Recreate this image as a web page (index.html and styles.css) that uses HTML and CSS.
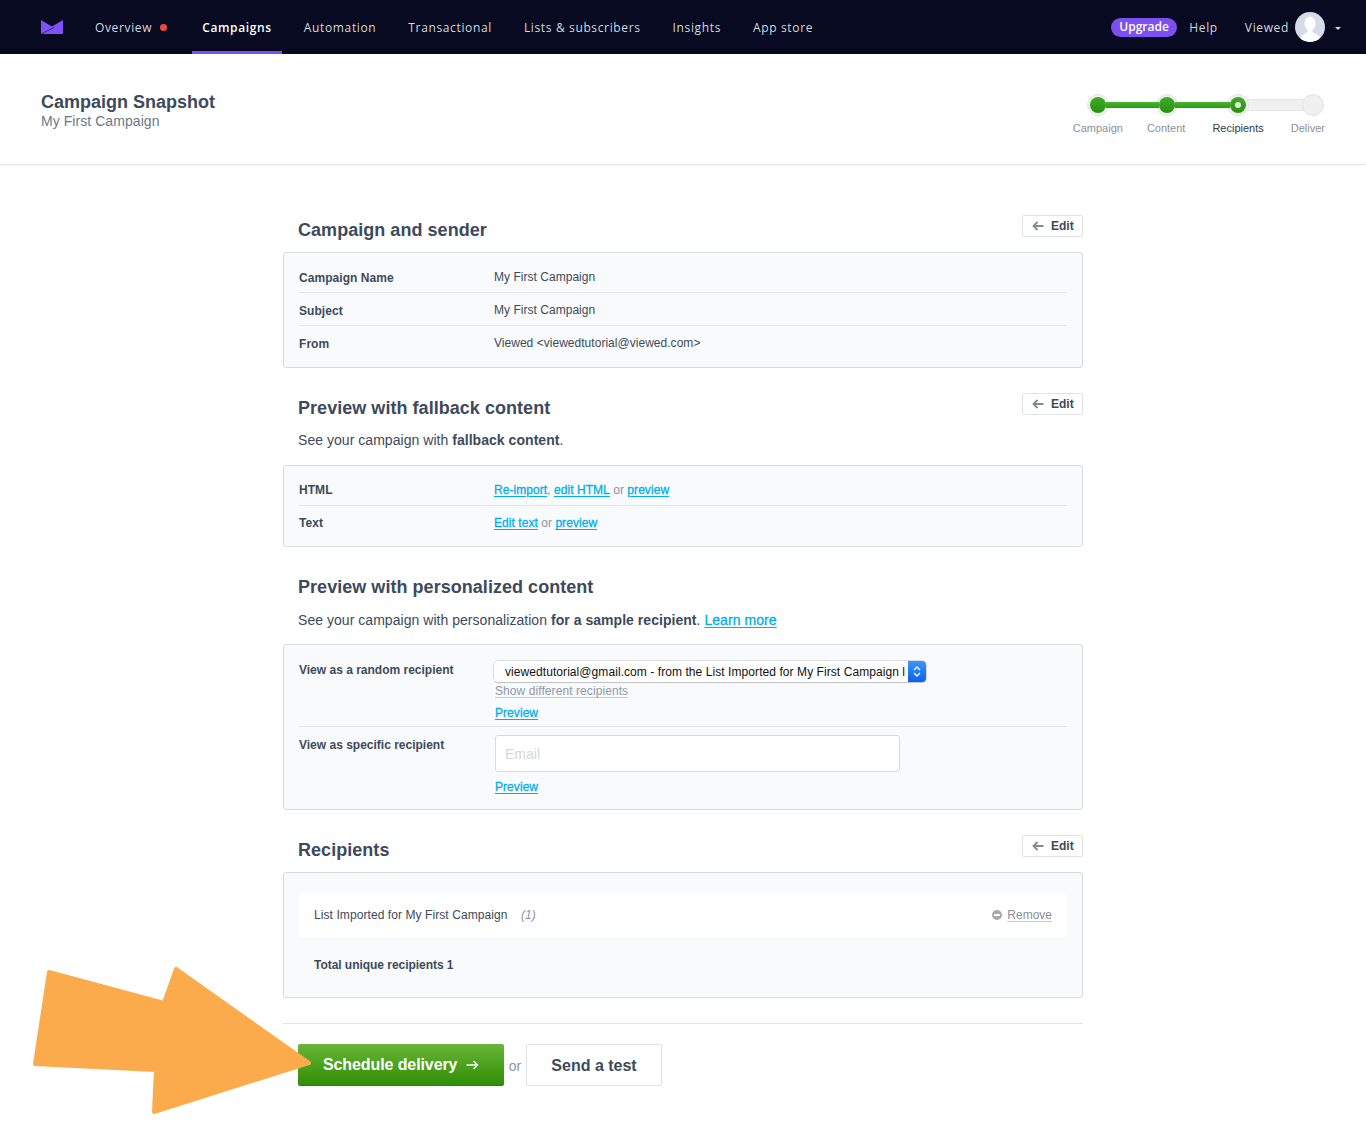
FILE: index.html
```html
<!DOCTYPE html>
<html lang="en">
<head>
<meta charset="utf-8">
<title>Campaign Snapshot</title>
<link rel="stylesheet" href="styles.css">
</head>
<body>
<nav class="nav">
  <svg class="logo" width="22" height="14" viewBox="0 0 22 14"><path d="M0 0 L11 6.5 L22 0 V14 H0 Z" fill="#7f52f5"/><path d="M0 14 L13 7.5" fill="none" stroke="#2a1f6e" stroke-width="0.8"/></svg>
  <ul class="nav-links">
    <li class="nav-link nav-overview">Overview<span class="nav-dot"></span></li>
    <li class="nav-link nav-active">Campaigns</li>
    <li class="nav-link">Automation</li>
    <li class="nav-link">Transactional</li>
    <li class="nav-link">Lists &amp; subscribers</li>
    <li class="nav-link">Insights</li>
    <li class="nav-link">App store</li>
  </ul>
  <div class="nav-right">
    <span class="upgrade">Upgrade</span>
    <span class="nav-help">Help</span>
    <span class="nav-user">Viewed</span>
    <svg class="avatar" width="30" height="30" viewBox="0 0 30 30"><defs><clipPath id="avatar-clip"><circle cx="15" cy="15" r="15"/></clipPath></defs><circle cx="15" cy="15" r="15" fill="#d5dce6"/><g clip-path="url(#avatar-clip)" fill="#fff"><ellipse cx="15" cy="11.5" rx="5.5" ry="7"/><path d="M12.5 17 h5 v3 l6 3.5 q2 1.5 2 6.5 H5 q0-5 2-6.5 l5.5-3.5 Z"/></g></svg>
    <span class="caret"></span>
  </div>
</nav>

<header class="page-head">
  <div>
    <h1 class="page-title">Campaign Snapshot</h1>
    <p class="page-sub">My First Campaign</p>
  </div>
  <div class="stepper">
    <div class="track">
      <span class="dot dot-done"></span><span class="bar bar-1 bar-done"></span>
      <span class="dot dot-done"></span><span class="bar bar-2 bar-done"></span>
      <span class="dot dot-done dot-current"></span><span class="bar bar-3"></span>
      <span class="dot"></span>
    </div>
    <div class="step-labels">
      <span>Campaign</span><span>Content</span><span class="step-current">Recipients</span><span>Deliver</span>
    </div>
  </div>
</header>

<main class="main">
  <section class="section">
    <div class="sec-head">
      <h2 class="sec-title">Campaign and sender</h2>
      <a class="edit"><svg width="12" height="10" viewBox="0 0 12 10"><path d="M11.5 5 H1.5 M5.5 1 L1.5 5 L5.5 9" fill="none" stroke="#85888c" stroke-width="1.8"/></svg>Edit</a>
    </div>
    <div class="box box-gap">
      <div class="row"><span class="label">Campaign Name</span><span class="value">My First Campaign</span></div>
      <div class="row"><span class="label">Subject</span><span class="value">My First Campaign</span></div>
      <div class="row"><span class="label">From</span><span class="value">Viewed &lt;viewedtutorial@viewed.com&gt;</span></div>
    </div>
  </section>

  <section class="section">
    <div class="sec-head">
      <h2 class="sec-title">Preview with fallback content</h2>
      <a class="edit"><svg width="12" height="10" viewBox="0 0 12 10"><path d="M11.5 5 H1.5 M5.5 1 L1.5 5 L5.5 9" fill="none" stroke="#85888c" stroke-width="1.8"/></svg>Edit</a>
    </div>
    <p class="sec-text">See your campaign with <b>fallback content</b>.</p>
    <div class="box box-links">
      <div class="row"><span class="label">HTML</span><span class="value"><a class="link">Re-import</a><span class="muted">,</span> <a class="link">edit HTML</a> <span class="muted">or</span> <a class="link">preview</a></span></div>
      <div class="row"><span class="label">Text</span><span class="value"><a class="link">Edit text</a> <span class="muted">or</span> <a class="link">preview</a></span></div>
    </div>
  </section>

  <section class="section">
    <div class="sec-head">
      <h2 class="sec-title">Preview with personalized content</h2>
    </div>
    <p class="sec-text sec-text-low">See your campaign with personalization <b>for a sample recipient</b>. <a class="link">Learn more</a></p>
    <div class="box box-form">
      <div class="form-row">
        <span class="form-label">View as a random recipient</span>
        <div class="form-col">
          <div class="select-wrap">
            <select class="select"><option>viewedtutorial@gmail.com - from the List Imported for My First Campaign list</option></select>
            <span class="select-cap"><svg width="8" height="13" viewBox="0 0 8 13"><path d="M1 5 L4 2 L7 5 M1 8 L4 11 L7 8" fill="none" stroke="#fff" stroke-width="1.4"/></svg></span>
          </div>
          <a class="show-diff">Show different recipients</a>
          <a class="link preview-link">Preview</a>
        </div>
      </div>
      <div class="form-row form-row-2">
        <span class="form-label">View as specific recipient</span>
        <div class="form-col">
          <input class="email" type="text" placeholder="Email">
          <a class="link preview-link preview-2">Preview</a>
        </div>
      </div>
    </div>
  </section>

  <section class="section">
    <div class="sec-head">
      <h2 class="sec-title">Recipients</h2>
      <a class="edit"><svg width="12" height="10" viewBox="0 0 12 10"><path d="M11.5 5 H1.5 M5.5 1 L1.5 5 L5.5 9" fill="none" stroke="#85888c" stroke-width="1.8"/></svg>Edit</a>
    </div>
    <div class="box box-gap box-recipients">
      <div class="list-row">
        <span class="list-name">List Imported for My First Campaign <i class="list-count">(1)</i></span>
        <a class="remove"><span class="remove-icon"></span><span class="remove-text">Remove</span></a>
      </div>
      <div class="total">Total unique recipients 1</div>
    </div>
  </section>

  <footer class="actions">
    <a class="btn-primary">Schedule delivery<svg width="13" height="10" viewBox="0 0 13 10"><path d="M0.5 5 H11.5 M7.5 1 L11.5 5 L7.5 9" fill="none" stroke="#fff" stroke-width="1.3"/></svg></a>
    <span class="or">or</span>
    <a class="btn-secondary">Send a test</a>
  </footer>
</main>

<svg class="big-arrow" width="300" height="160" viewBox="0 0 300 160"><path d="M19 9 L134 40 L146 6 L279 100 L124 149 L126 107 L5 101 Z" fill="#fbab4c" stroke="#fbab4c" stroke-width="4" stroke-linejoin="round"/></svg>
</body>
</html>
```
FILE: styles.css
```css
* { box-sizing: border-box; }
html, body { margin: 0; padding: 0; }
body {
  position: relative;
  min-height: 1146px;
  background: #fff;
  color: #3c4a5c;
  font-family: "Liberation Sans", Arial, sans-serif;
  font-size: 12px;
}
a { cursor: pointer; }
h1, h2, p, ul { margin: 0; padding: 0; }

/* nav */
.nav {
  display: flex;
  align-items: center;
  height: 54px;
  padding: 0 25px 0 41px;
  background: #070a20;
  font-family: "Open Sans", sans-serif;
  font-size: 12px;
  letter-spacing: 0.64px;
  color: #d6d8de;
}
.logo { flex: none; margin-right: 22px; }
.nav-links { display: flex; gap: 12px; height: 54px; list-style: none; }
.nav-link {
  display: flex;
  align-items: center;
  height: 54px;
  padding: 0 10px;
  border-bottom: 3px solid transparent;
  border-top: 3px solid transparent;
  white-space: nowrap;
}
.nav-overview { padding-right: 13px; }
.nav-dot {
  width: 7px;
  height: 7px;
  margin-left: 8px;
  border-radius: 50%;
  background: #f4483a;
}
.nav-active { border-bottom-color: #7c4ff0; color: #fff; font-weight: 600; }
.nav-right { display: flex; align-items: center; margin-left: auto; }
.upgrade {
  padding: 0 8.5px;
  height: 19px;
  line-height: 18px;
  margin-right: 12px;
  border-radius: 10px;
  background: #7c4ff0;
  color: #fff;
  font-weight: 600;
  letter-spacing: 0;
}
.nav-help { margin-right: 27px; }
.nav-user { margin-right: 6px; }
.avatar { flex: none; margin-top: -1px; }
.caret {
  width: 0;
  height: 0;
  margin: 2px 0 0 10px;
  border: 3px solid transparent;
  border-top: 3px solid #d6d8de;
  border-bottom: 0;
}

/* page header */
.page-head {
  display: flex;
  justify-content: space-between;
  height: 111px;
  padding: 0 41px;
  border-bottom: 1px solid #e6e7e9;
  box-shadow: 0 1px 2px rgba(0, 0, 0, 0.04);
}
.page-title {
  margin-top: 37px;
  font-size: 18px;
  line-height: 22px;
  font-weight: 700;
  color: #3c4a5c;
}
.page-sub {
  margin-top: -1px;
  font-size: 14px;
  line-height: 18px;
  letter-spacing: 0.06px;
  color: #6b7889;
}
.stepper { display: flex; flex-direction: column; align-items: flex-end; padding-top: 40px; }
.track { display: flex; align-items: center; height: 22px; margin-right: 1px; }
.dot {
  position: relative;
  z-index: 1;
  flex: none;
  width: 22px;
  height: 22px;
  border-radius: 50%;
  background: #f0f0f0;
  border: 1px solid #e4e4e4;
  display: flex;
  align-items: center;
  justify-content: center;
}
.dot-done::before {
  content: "";
  width: 16px;
  height: 16px;
  border-radius: 50%;
  background: linear-gradient(#3cae24, #2a9010);
}
.dot-current::after {
  content: "";
  position: absolute;
  width: 6px;
  height: 6px;
  border-radius: 50%;
  background: #e9efe6;
}
.bar { flex: none; margin: 0 -3px; background: #f0f0f0; height: 12px; border-top: 1px solid #e4e4e4; border-bottom: 1px solid #e8e8e8; }
.bar-1 { width: 53px; }
.bar-2 { width: 55px; }
.bar-3 { width: 59px; }
.bar-done {
  position: relative;
  z-index: 2;
  height: 6px;
  border: 0;
  background: linear-gradient(#48b62e, #2f9a15);
}
.step-labels {
  display: flex;
  margin-top: 5px;
  font-size: 11px;
  line-height: 14px;
  color: #8a919b;
}
.step-labels span + span { margin-left: 24px; }
.step-labels span:nth-child(3) { margin-left: 27px; }
.step-labels span:nth-child(4) { margin-left: 27px; }
.step-current { color: #2d3a4a; }

/* main */
.main { width: 800px; margin: 0 auto; padding-top: 50px; }
.section { margin-bottom: 25px; }
.sec-head { display: flex; justify-content: space-between; align-items: flex-start; padding-left: 15px; }
.sec-title {
  margin-top: 4px;
  font-size: 18px;
  line-height: 22px;
  font-weight: 700;
  letter-spacing: 0.04px;
  color: #3c4a5c;
}
.edit {
  display: flex;
  align-items: center;
  gap: 7px;
  width: 61px;
  height: 22px;
  padding-left: 9px;
  border: 1px solid #dfe2e6;
  border-radius: 2px;
  background: #fff;
  font-size: 12px;
  font-weight: 700;
  color: #3c4a5c;
}
.sec-text {
  margin: 11px 0 15px;
  padding-left: 15px;
  font-size: 14px;
  line-height: 20px;
  letter-spacing: 0.04px;
  color: #3c4a5c;
}
.sec-text-low { margin: 12px 0 14px; }
.box {
  padding: 7px 15px 8px;
  border: 1px solid #d6dbe2;
  border-radius: 3px;
  background: #f9fafb;
}
.box-gap { margin-top: 11px; }
.box-links { padding-bottom: 7px; }
.row { display: flex; align-items: center; height: 33px; border-bottom: 1px solid #e3e6ea; }
.row:last-child { border-bottom: 0; }
.label { width: 195px; padding-top: 3px; font-size: 12px; font-weight: 700; letter-spacing: 0.05px; }
.value { padding-top: 1px; font-size: 12px; letter-spacing: 0.03px; color: #3c4a5c; }
.box-links .label { padding-top: 1px; }
.link {
  color: #00aeef;
  font-weight: 400;
  letter-spacing: 0.06px;
  text-decoration: underline;
  text-underline-offset: 2px;
  -webkit-text-stroke: 0.3px #00aeef;
}
.muted { color: #8a94a3; }

/* form box */
.box-form { padding: 0 15px; height: 166px; }
.form-row { display: flex; height: 82px; padding-top: 16px; border-bottom: 1px solid #e3e6ea; }
.form-row-2 { height: auto; padding-top: 8px; border-bottom: 0; }
.form-label { width: 195px; padding-top: 1px; font-weight: 700; line-height: 16px; flex: none; }
.form-row-2 .form-label { padding-top: 2px; }
.form-col { display: flex; flex-direction: column; align-items: flex-start; }
.select-wrap {
  display: flex;
  width: 432px;
  height: 21px;
  border-radius: 4px;
  background: #fff;
  box-shadow: 0 0 0 0.5px #b8bcc4, 0 1px 1px rgba(0, 0, 0, 0.2);
  overflow: hidden;
}
.select {
  flex: 1;
  min-width: 0;
  padding: 0 3px 0 11px;
  border: 0;
  outline: 0;
  appearance: none;
  background: #fff;
  color: #111;
  font-family: "Liberation Sans", Arial, sans-serif;
  font-size: 12px;
  letter-spacing: 0.07px;
}
.select-cap {
  display: flex;
  align-items: center;
  justify-content: center;
  flex: none;
  width: 18px;
  background: linear-gradient(#3b95fb, #0a62ea);
}
.show-diff {
  margin: 1px 0 0 1px;
  line-height: 17px;
  letter-spacing: 0.08px;
  color: #8e99a9;
  text-decoration: underline;
  text-decoration-color: #c6ccd5;
  text-underline-offset: 2px;
}
.preview-link { margin: 4px 0 0 1px; line-height: 18px; }
.preview-2 { margin-top: 6px; }
.email {
  width: 405px;
  height: 37px;
  margin-left: 1px;
  padding: 0 9px;
  border: 1px solid #d6dbe2;
  border-radius: 3px;
  background: #fff;
  outline: 0;
  font-family: "Liberation Sans", Arial, sans-serif;
  font-size: 14px;
}
.email::placeholder { color: #d5d7da; opacity: 1; }

/* recipients */
.box-recipients { height: 126px; padding: 20px 15px 0; }
.list-row {
  display: flex;
  align-items: center;
  justify-content: space-between;
  height: 44px;
  padding: 0 15px;
  border-radius: 3px;
  background: #fff;
}
.list-name { letter-spacing: 0.08px; }
.list-count { margin-left: 10px; color: #8a94a3; }
.remove { display: flex; align-items: center; gap: 5px; color: #8b8f96; }
.remove-icon {
  position: relative;
  width: 10px;
  height: 10px;
  border-radius: 50%;
  background: #a7a9ad;
}
.remove-icon::after {
  content: "";
  position: absolute;
  left: 2px;
  top: 4px;
  width: 6px;
  height: 2px;
  background: #fff;
}
.remove-text { text-decoration: underline; text-decoration-color: #c6c8cc; text-underline-offset: 2px; }
.total { margin-top: 19px; padding-left: 15px; line-height: 18px; font-weight: 700; letter-spacing: -0.04px; }

/* actions */
.actions {
  display: flex;
  align-items: center;
  padding: 20px 0 0 15px;
  border-top: 1px solid #e0e3e7;
}
.btn-primary {
  display: flex;
  align-items: center;
  gap: 9px;
  width: 206px;
  height: 42px;
  padding: 1px 0 0 25px;
  border-radius: 2px;
  border-bottom: 1px solid #2a8303;
  background: linear-gradient(#69b636, #2f8e08);
  color: #fff;
  font-size: 16px;
  font-weight: 700;
  letter-spacing: -0.1px;
}
.or { width: 22px; padding-top: 1px; text-align: center; font-size: 14px; color: #8a94a3; }
.btn-secondary {
  display: flex;
  align-items: center;
  justify-content: center;
  width: 136px;
  height: 42px;
  padding-top: 1px;
  border: 1px solid #dfe2e6;
  border-radius: 2px;
  background: #fff;
  color: #3c4a5c;
  font-size: 16px;
  font-weight: 700;
}

/* annotation arrow overlaid on the screenshot */
.big-arrow { position: absolute; left: 30px; top: 963px; }
```
